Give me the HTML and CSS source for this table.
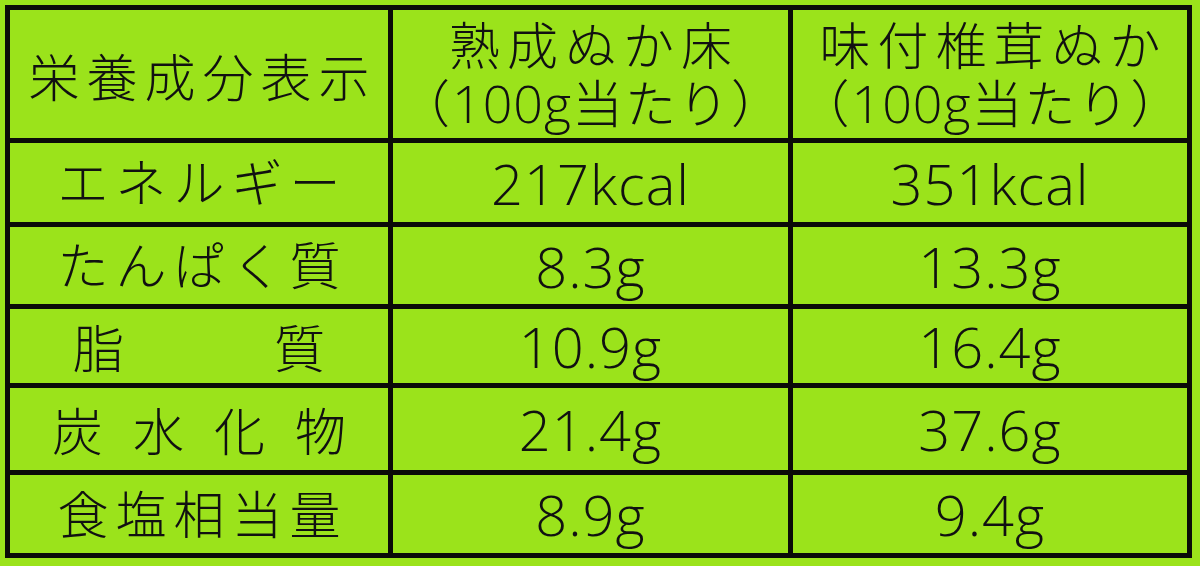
FILE: index.html
```html
<!DOCTYPE html>
<html lang="ja">
<head>
<meta charset="utf-8">
<link rel="stylesheet" href="styles.css">
</head>
<body>
<div class="table">
  <div class="cell head"><span class="jp">栄養成分表示</span></div>
  <div class="cell head two"><span class="jp">熟成ぬか床</span><span class="jp sub">（<span class="num">100g</span>当たり）</span></div>
  <div class="cell head two"><span class="jp">味付椎茸ぬか</span><span class="jp sub">（<span class="num">100g</span>当たり）</span></div>

  <div class="cell label"><span class="jp">エネルギー</span></div>
  <div class="cell val">217kcal</div>
  <div class="cell val">351kcal</div>

  <div class="cell label"><span class="jp">たんぱく質</span></div>
  <div class="cell val">8.3g</div>
  <div class="cell val">13.3g</div>

  <div class="cell label"><span class="spread narrow"><span>脂</span><span>質</span></span></div>
  <div class="cell val">10.9g</div>
  <div class="cell val">16.4g</div>

  <div class="cell label"><span class="spread wide"><span>炭</span><span>水</span><span>化</span><span>物</span></span></div>
  <div class="cell val">21.4g</div>
  <div class="cell val">37.6g</div>

  <div class="cell label"><span class="jp">食塩相当量</span></div>
  <div class="cell val">8.9g</div>
  <div class="cell val">9.4g</div>
</div>
</body>
</html>
```

FILE: styles.css
```css
html, body {
  margin: 0;
  padding: 0;
  background: #9be31b;
}
body {
  width: 1200px;
  height: 566px;
  overflow: hidden;
  padding: 5px 0 0 5px;
  box-sizing: border-box;
}
.table {
  display: grid;
  grid-template-columns: 378px 395px 394px;
  grid-template-rows: 128px 79px 77px 74px 82px 78px;
  gap: 5px;
  padding: 5px;
  background: #0b0b08;
  width: 1187px;
  height: 553px;
  box-sizing: border-box;
}
.cell {
  background: #9be31b;
  color: #111;
  display: flex;
  flex-direction: column;
  align-items: center;
  justify-content: center;
  font-family: "Open Sans", "Noto Sans CJK JP", sans-serif;
  font-weight: 300;
  overflow: hidden;
}
.jp {
  font-family: "Open Sans", "Noto Sans CJK JP", sans-serif;
  font-size: 51px;
  letter-spacing: 7px;
  padding-left: 7px;
  line-height: 1;
  white-space: nowrap;
}
.head.two .jp {
  display: block;
  height: 57px;
  line-height: 57px;
}
.head.two .jp.sub {
  letter-spacing: 2px;
  padding-left: 2px;
}
.head:first-child .jp {
  margin-top: 6px;
}
.num {
  font-size: 52px;
  letter-spacing: 1px;
}
.val {
  font-size: 56px;
  letter-spacing: 1px;
  line-height: 1;
}
.spread {
  display: flex;
  justify-content: space-between;
  font-family: "Noto Sans CJK JP", sans-serif;
  font-size: 51px;
  line-height: 1;
}
.spread.wide { width: 294px; }
.spread.narrow { width: 252px; }
```
